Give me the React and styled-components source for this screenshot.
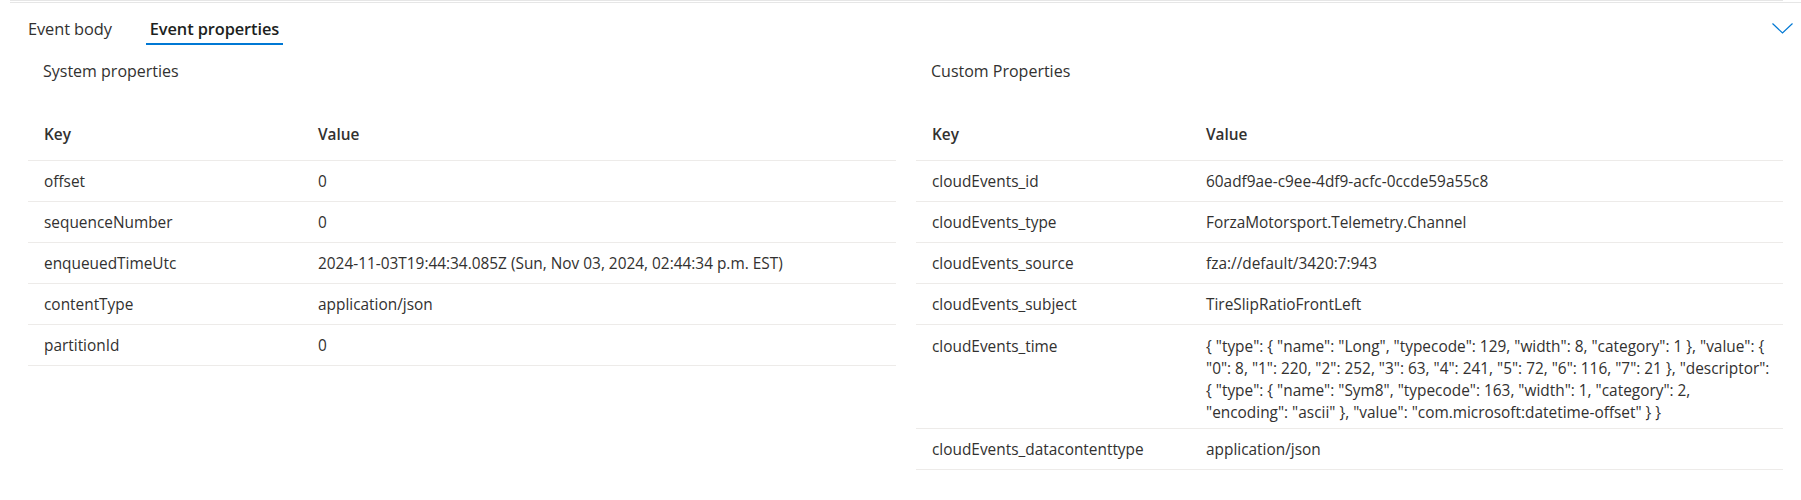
import React from 'react'
import styled, { createGlobalStyle } from 'styled-components'

const GlobalStyle = createGlobalStyle`
    body {
        margin: 0;
        background: #ffffff;
        font-family: "Open Sans", "Noto Sans", sans-serif;
        color: #323130;
    }
`

const Page = styled.div`
    width: 1801px;
    height: 500px;
    background: #ffffff;
    overflow: hidden;
`

const RuleLine = styled.div`
    height: 1px;
    margin: 0 ${props => props.$right}px 1px 10px;
    background: #e6e6e6;
`

const TabBar = styled.div`
    display: flex;
    align-items: center;
    justify-content: space-between;
    height: 42px;
    padding: 0 8px 0 24px;
`

const TabList = styled.div`
    display: flex;
    gap: 30px;
    height: 100%;
`

const Tab = styled.div`
    position: relative;
    display: flex;
    align-items: center;
    padding: 7px 4px 0;
    font-size: 16.4px;
    font-weight: ${props => (props.$active ? 600 : 400)};
    color: ${props => (props.$active ? '#201f1e' : '#323130')};
    letter-spacing: -0.1px;

    &::after {
        content: '';
        position: absolute;
        left: 0;
        right: 0;
        bottom: 1px;
        height: 2px;
        background: ${props => (props.$active ? '#0078d4' : 'transparent')};
    }
`

const Chevron = styled.svg`
    width: 21px;
    height: 11px;
    margin-top: 6px;
`

const Columns = styled.div`
    display: grid;
    grid-template-columns: 868px 867px;
    gap: 20px;
    padding: 14px 18px 0 28px;
`

const Section = styled.section`
    display: flex;
    flex-direction: column;
`

const SectionTitle = styled.div`
    font-size: 16px;
    line-height: 22px;
    padding-left: 15px;
    margin-bottom: 32px;
    color: #323130;
`

const Row = styled.div`
    display: grid;
    grid-template-columns: 274px 1fr;
    border-bottom: 1px solid #edebe9;
`

const Cell = styled.div`
    font-size: 15.4px;
    line-height: 22px;
    padding: ${props => (props.$header ? '10px 16px 14px' : props.$multi ? '11px 16px 4px' : '10px 16px 8px')};
    font-weight: ${props => (props.$header ? 600 : 400)};
    color: #323130;
    white-space: nowrap;
`

const Line = styled.div`
    white-space: nowrap;
`

const systemProps = [
    ['offset', '0'],
    ['sequenceNumber', '0'],
    ['enqueuedTimeUtc', '2024-11-03T19:44:34.085Z (Sun, Nov 03, 2024, 02:44:34 p.m. EST)'],
    ['contentType', 'application/json'],
    ['partitionId', '0'],
]

const customProps = [
    ['cloudEvents_id', '60adf9ae-c9ee-4df9-acfc-0ccde59a55c8'],
    ['cloudEvents_type', 'ForzaMotorsport.Telemetry.Channel'],
    ['cloudEvents_source', 'fza://default/3420:7:943'],
    ['cloudEvents_subject', 'TireSlipRatioFrontLeft'],
    ['cloudEvents_time', [
        '{ "type": { "name": "Long", "typecode": 129, "width": 8, "category": 1 }, "value": {',
        '"0": 8, "1": 220, "2": 252, "3": 63, "4": 241, "5": 72, "6": 116, "7": 21 }, "descriptor":',
        '{ "type": { "name": "Sym8", "typecode": 163, "width": 1, "category": 2,',
        '"encoding": "ascii" }, "value": "com.microsoft:datetime-offset" } }',
    ]],
    ['cloudEvents_datacontenttype', 'application/json'],
]

function PropertyTable({ title, rows }) {
    return (
        <Section>
            <SectionTitle>{title}</SectionTitle>
            <Row>
                <Cell $header>Key</Cell>
                <Cell $header>Value</Cell>
            </Row>
            {rows.map(([key, value]) => {
                const multi = Array.isArray(value)
                return (
                    <Row key={key}>
                        <Cell $multi={multi}>{key}</Cell>
                        <Cell $multi={multi}>
                            {multi ? value.map(line => <Line key={line}>{line}</Line>) : value}
                        </Cell>
                    </Row>
                )
            })}
        </Section>
    )
}

export default function App() {
    return (
        <Page>
            <GlobalStyle />
            <RuleLine $right={18} />
            <RuleLine $right={0} />
            <TabBar>
                <TabList>
                    <Tab>Event body</Tab>
                    <Tab $active>Event properties</Tab>
                </TabList>
                <Chevron viewBox="0 0 21 11">
                    <polyline points="0.5,0.5 10.5,10 20.5,0.5" fill="none" stroke="#0078d4" strokeWidth="1.2" />
                </Chevron>
            </TabBar>
            <Columns>
                <PropertyTable title="System properties" rows={systemProps} />
                <PropertyTable title="Custom Properties" rows={customProps} />
            </Columns>
        </Page>
    )
}
